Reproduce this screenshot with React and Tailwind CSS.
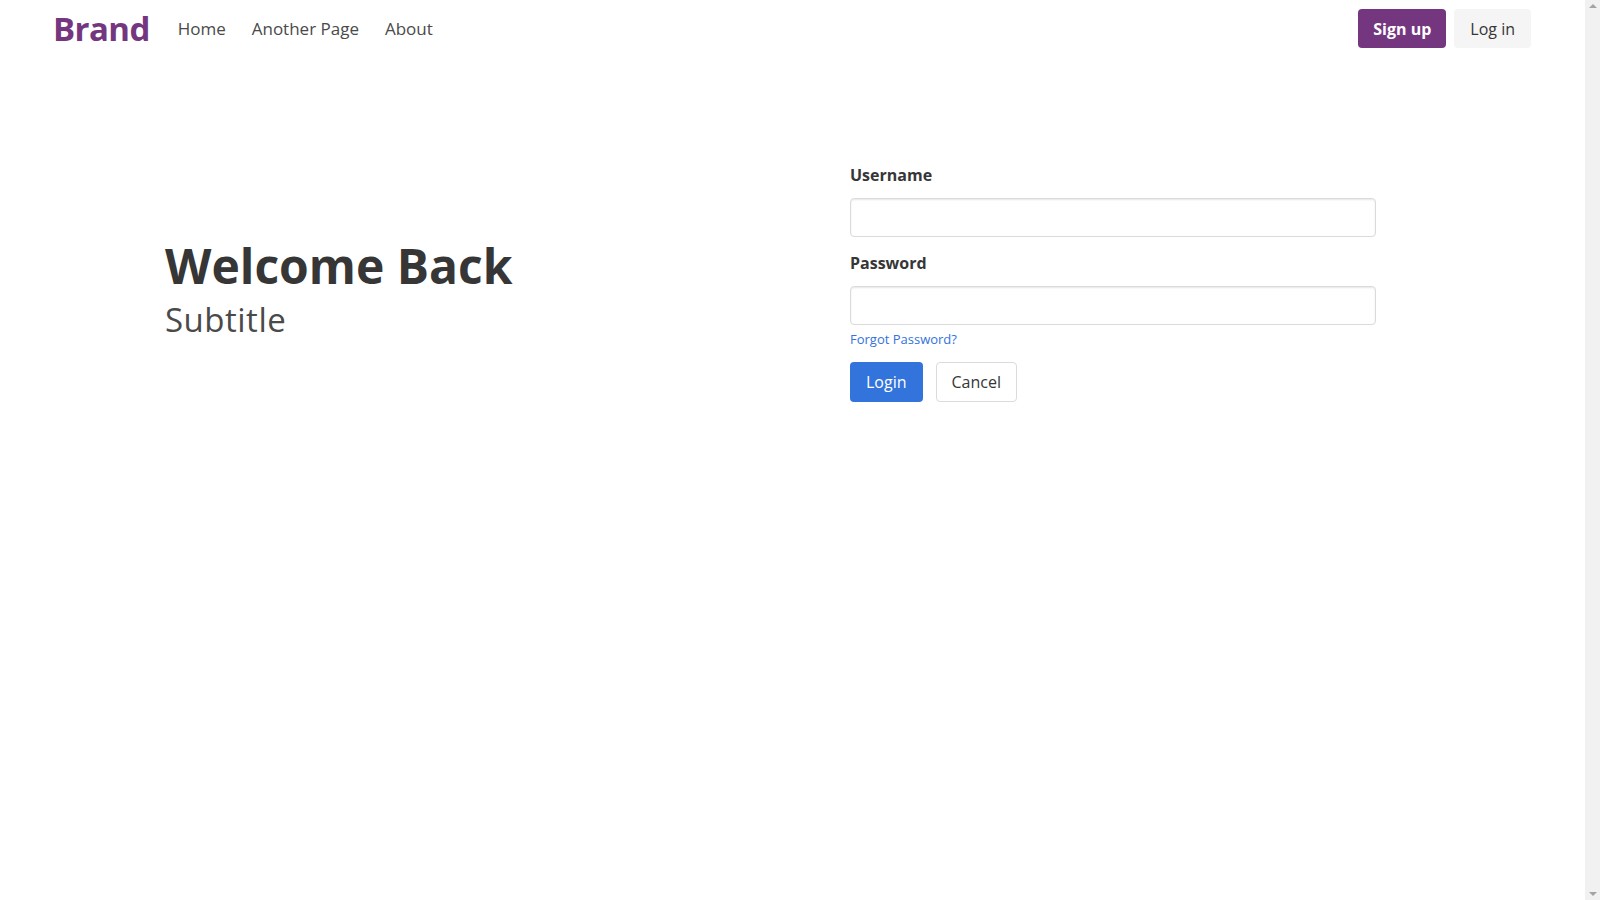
import React from 'react';

const font = { fontFamily: '"Open Sans", "Noto Sans", sans-serif' };

const NavBar = () => (
  <nav className="flex items-center justify-between h-[57px] pl-[53px] pr-[54px]">
    <div className="flex items-center">
      <a href="#" className="text-[33px] font-bold leading-[33px] text-[#74377f] tracking-[-0.6px]">Brand</a>
      <div className="flex items-center gap-[26px] ml-[28px] text-[17px] leading-[24px] text-[#4a4a4a]">
        <a href="#">Home</a>
        <a href="#">Another Page</a>
        <a href="#">About</a>
      </div>
    </div>
    <div className="flex items-center gap-2">
      <button className="h-[39px] px-[15px] rounded-[4px] bg-[#74377f] text-white font-bold text-[16px]">Sign up</button>
      <button className="h-[39px] px-[16px] rounded-[4px] bg-[#f5f5f5] text-[#363636] text-[16px]">Log in</button>
    </div>
  </nav>
);

const Field = ({ label, type, className = '' }) => (
  <div className={className}>
    <label className="block text-[16px] leading-[24px] font-bold text-[#363636] mb-[11px]">{label}</label>
    <input
      type={type}
      className="block w-full h-[39px] rounded-[4px] border border-[#dbdbdb] bg-white shadow-[inset_0_1px_2px_rgba(10,10,10,0.1)] px-3 outline-none"
    />
  </div>
);

// fake classic scrollbar track seen on the right edge
const ScrollTrack = () => (
  <aside className="w-[15px] shrink-0 bg-[#f1f1f1] flex flex-col items-center justify-between py-[4px]">
    <span className="w-0 h-0 border-l-[4px] border-r-[4px] border-b-[4px] border-l-transparent border-r-transparent border-b-[#a3a3a3]" />
    <span className="w-0 h-0 border-l-[4px] border-r-[4px] border-t-[4px] border-l-transparent border-r-transparent border-t-[#a3a3a3]" />
  </aside>
);

export default function App() {
  return (
    <div className="flex h-screen overflow-hidden bg-white text-[#4a4a4a]" style={font}>
      <div className="flex-1 min-w-0">
        <NavBar />
        <main className="flex pt-[106px]">
          <div className="w-[850px] shrink-0 pl-[165px] pt-[76px]">
            <h1 className="text-[48px] leading-[54px] font-bold text-[#363636]">Welcome Back</h1>
            <h2 className="text-[33px] leading-[41px] tracking-[0.5px] text-[#4a4a4a] mt-[6px]">Subtitle</h2>
          </div>
          <div className="w-[526px]">
            <Field label="Username" type="text" />
            <Field label="Password" type="password" className="mt-[14px]" />
            <a href="#" className="block mt-[4px] text-[13px] leading-[20px] text-[#3273dc]">Forgot Password?</a>
            <div className="flex gap-[13px] mt-[13px]">
              <button className="h-[40px] px-[16px] rounded-[4px] bg-[#3273dc] text-white text-[16px]">Login</button>
              <button className="h-[40px] px-[15px] rounded-[4px] bg-white border border-[#dbdbdb] text-[#363636] text-[16px]">Cancel</button>
            </div>
          </div>
        </main>
      </div>
      <ScrollTrack />
    </div>
  );
}
